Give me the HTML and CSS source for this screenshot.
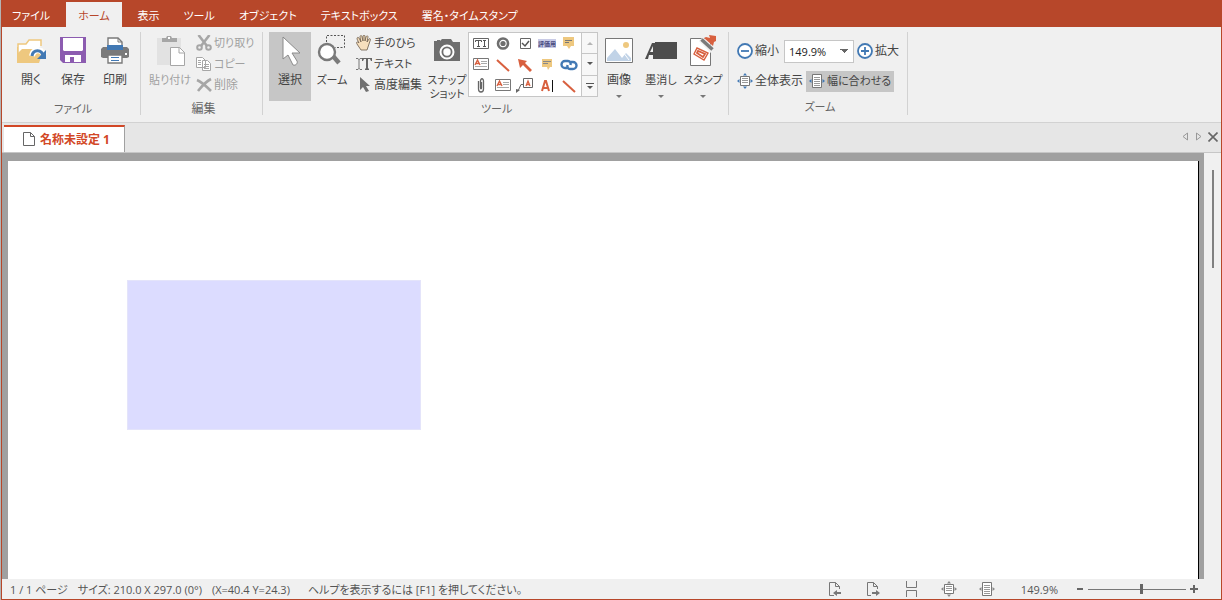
FILE: index.html
```html
<!DOCTYPE html>
<html lang="ja">

<head>
    <meta charset="UTF-8">
    <meta name="viewport" content="width=device-width, initial-scale=1.0">
    <title>名称未設定 1</title>
    <link rel="stylesheet" href="styles.css">
</head>

<body>
    <div class="window">
        <nav class="menu">
            <button class="menu-tab file">ファイル</button>
            <button class="menu-tab active">ホーム</button>
            <button class="menu-tab">表示</button>
            <button class="menu-tab">ツール</button>
            <button class="menu-tab">オブジェクト</button>
            <button class="menu-tab">テキストボックス</button>
            <button class="menu-tab">署名・タイムスタンプ</button>
        </nav>

        <div class="ribbon">
            <section class="group">
                <div class="tools">
                    <button class="big">
                        <svg width="32" height="32" viewBox="0 0 32 32"><path d="M3 26V9h8l3-4h12v6" fill="#fff" stroke="#eec87f" stroke-width="1.5"/><path d="M2 28V12h1v6l4-4h22l-5 14z" fill="#eec87f"/><path d="M17 21c1-7 10-8 12-1" fill="none" stroke="#fff" stroke-width="6"/><path d="M17 21c1-7 10-7 11 0" fill="none" stroke="#4279b4" stroke-width="3"/><path d="M31 15v9h-9z" fill="#4279b4"/></svg>
                        <span>開く</span>
                    </button>
                    <button class="big">
                        <svg width="32" height="32" viewBox="0 0 32 32"><path d="M3 2h26v26H6l-3-3z" fill="#8c5cb0"/><path d="M6 3h20v12l-1 1H7l-1-1zM8 20h16v7h-7v-5h-4v5H8z" fill="#fff"/></svg>
                        <span>保存</span>
                    </button>
                    <button class="big">
                        <svg width="32" height="32" viewBox="0 0 32 32"><path d="M2 14l2-2h24l2 2v8l-2 1H4l-2-1z" fill="#7a7a7a"/><path d="M9 13V3h10l4 4v6M9 20h14v8H9z" fill="#fff" stroke="#7a7a7a" stroke-width="1.4"/><path d="M19 3v4h4" fill="none" stroke="#7a7a7a"/><path d="M8 10h16v5H8zM12 22h8v1h-8zM12 25h8v1h-8z" fill="#4279b4"/><path d="M26 18h2v2h-2z" fill="#fff"/></svg>
                        <span>印刷</span>
                    </button>
                </div>
                <h2 class="kana">ファイル</h2>
            </section>

            <section class="group edit">
                <div class="tools">
                    <button class="big kana" disabled>
                        <svg width="32" height="32" viewBox="0 0 32 32"><path d="M3 3h24v27H3z" fill="#e2e2e2"/><path d="M8 7V3h4l1-2h4l1 2h5v4z" fill="#a6a6a6"/><path d="M14 2h2v2h-2z" fill="#fff"/><path d="M16.500 12.500h9l5 5v13h-14z" fill="#fff" stroke="#a6a6a6"/><path d="M25 12v6h6" fill="none" stroke="#a6a6a6"/></svg>
                        <span>貼り付け</span>
                    </button>
                    <div class="stack">
                        <button class="small kana" disabled>
                            <svg width="16" height="16" viewBox="0 0 16 16"><path d="M2.500 0l8.500 11M13.500 0L5 11" stroke="#a6a6a6" stroke-width="2.600" fill="none"/><circle cx="3.500" cy="12.500" r="2.300" fill="none" stroke="#a6a6a6" stroke-width="2"/><circle cx="12.500" cy="12.500" r="2.300" fill="none" stroke="#a6a6a6" stroke-width="2"/></svg>
                            <span>切り取り</span>
                        </button>
                        <button class="small kana" disabled>
                            <svg width="16" height="16" viewBox="0 0 16 16"><path d="M.5 1.500h6l3 3v7h-9zM6.500 4.500h5l3 3v7h-8z" fill="#fff" stroke="#a6a6a6"/><path d="M2 4.500h3M2 6.500h3M2 8.500h3M8 8.500h5M8 10.500h5M8 12.500h5" stroke="#a6a6a6"/></svg>
                            <span>コピー</span>
                        </button>
                        <button class="small" disabled>
                            <svg width="16" height="16" viewBox="0 0 16 16"><path d="M1 3c5 2 9 6 14 11M15 2C9 5 6 9 2 14" stroke="#a6a6a6" stroke-width="2.600" fill="none"/></svg>
                            <span>削除</span>
                        </button>
                    </div>
                </div>
                <h2>編集</h2>
            </section>

            <section class="group main">
                <div class="tools">
                    <button class="big selected">
                        <svg width="32" height="32" viewBox="0 0 32 32"><path d="M9 2v22l5-4 5 10c3 1 5-2 4-4l-5-8h8z" fill="#fff" stroke="#8a8a8a"/></svg>
                        <span>選択</span>
                    </button>
                    <button class="big kana">
                        <svg width="32" height="32" viewBox="0 0 32 32"><path d="M10.500 7V.5h18v12H19" fill="none" stroke="#555" stroke-dasharray="2 1.500"/><path d="M17 21l6 7" stroke="#7a7a7a" stroke-width="4.500"/><circle cx="11" cy="17" r="8" fill="#fff" stroke="#7a7a7a" stroke-width="2.400"/></svg>
                        <span>ズーム</span>
                    </button>
                    <div class="stack">
                        <button class="small kana">
                            <svg width="16" height="16" viewBox="0 0 16 16"><path d="M5 15l-4-6c-1-2 0-3 2-1L1 4c0-2 1-2 2-1l2 4-1-5c0-2 2-2 2 0l1 4V1c0-1 2-1 2 0v5l1-4c1-2 2-1 2 0l-1 5 2-3c1-1 2 0 1 2l-3 9z" fill="#f7dfbd" stroke="#6b5a49" stroke-width=".8"/></svg>
                            <span>手のひら</span>
                        </button>
                        <button class="small kana">
                            <svg width="16" height="16" viewBox="0 0 16 16"><path d="M0 2.500h2l1 1 1-1h2M3 3v10M0 13.500h2l1-1 1 1h2" fill="none" stroke="#777"/><path d="M6 2h10v3h-1l-1-2h-2v9l1 1v1H9v-1l1-1V3H8L7 5H6z" fill="#666"/></svg>
                            <span>テキスト</span>
                        </button>
                        <button class="small">
                            <svg width="16" height="16" viewBox="0 0 16 16"><path d="M4 0v13l3-3 3 5 3-1-3-5h4z" fill="#707070"/></svg>
                            <span>高度編集</span>
                        </button>
                    </div>
                    <button class="big kana two-line">
                        <svg width="32" height="32" viewBox="0 0 32 32"><path d="M3 6h3V5h3v1l2-2h9l2 3h7v19H3z" fill="#6e6e6e"/><circle cx="16" cy="17" r="6.500" fill="#6e6e6e" stroke="#fff" stroke-width="2"/><circle cx="16" cy="17" r="3.700" fill="#fff"/></svg>
                        <span>スナップ<br>ショット</span>
                    </button>

                    <div class="gallery">
                        <div class="gallery-items">
                            <button aria-label="テキストフィールド"><svg width="18" height="16" viewBox="0 0 18 16"><path d="M1.500 2.500h15v10h-15z" fill="#fff" stroke="#666"/><path d="M3.500 6V4.500h6V6M6.500 4.500v6M5 10.500h3M11 4.500h3M11 10.500h3M12.500 4.500v6" fill="none" stroke="#555"/></svg></button>
                            <button aria-label="ラジオボタン"><svg width="18" height="16" viewBox="0 0 18 16"><circle cx="9" cy="7.500" r="5" fill="#fff" stroke="#6e6e6e" stroke-width="2.600"/><circle cx="9" cy="7.500" r="2.600" fill="#6e6e6e"/></svg></button>
                            <button aria-label="チェックボックス"><svg width="18" height="16" viewBox="0 0 18 16"><path d="M4.500 2.500h10v10h-10z" fill="#fff" stroke="#666"/><path d="M6 7l3 3 4-5" fill="none" stroke="#555" stroke-width="1.500"/></svg></button>
                            <button aria-label="評価用スタンプ"><svg width="18" height="16" viewBox="0 0 18 16"><path d="M0 3h18v9H0z" fill="#c9cbe6"/><text x="0" y="10" class="stamp-text">評価用</text></svg></button>
                            <button aria-label="ノート"><svg width="18" height="16" viewBox="0 0 18 16"><path d="M3 1h11v9h-3l-2 3-2-3H3z" fill="#eec87f"/><path d="M5 4.500h7M5 6.500h4" stroke="#777"/></svg></button>
                            <button aria-label="テキスト注釈"><svg width="18" height="16" viewBox="0 0 18 16"><use href="#note-box"/></svg></button>
                            <button aria-label="直線"><svg width="18" height="16" viewBox="0 0 18 16"><use href="#line"/></svg></button>
                            <button aria-label="矢印"><svg width="18" height="16" viewBox="0 0 18 16"><path d="M2 2l9 2-2 2 7 7-2 2-7-7-3 3z" fill="#d8603f"/></svg></button>
                            <button aria-label="吹き出し"><svg width="18" height="16" viewBox="0 0 18 16"><path d="M4 2h10v8h-2l-2 3-1-3H4z" fill="#eec87f"/><path d="M5 4.500h8M5 6.500h5" stroke="#888"/></svg></button>
                            <button aria-label="リンク"><svg width="18" height="16" viewBox="0 0 18 16"><path d="M8 11H5a3.500 3.500 0 010-7h3C10 4 11 6 10.500 8M10 5h3a3.500 3.500 0 010 7h-3C8 12 7 10 7.500 8" fill="none" stroke="#4279b4" stroke-width="2.400"/></svg></button>
                            <button aria-label="添付"><svg width="18" height="16" viewBox="0 0 18 16"><path d="M6.500 3v8c0 4 5 4 5 0V3c0-3-3-3-3 0v7c0 1 1 1 1 0V4" fill="none" stroke="#666" stroke-width="1.300"/></svg></button>
                            <button aria-label="テキストボックス"><svg width="18" height="16" viewBox="0 0 18 16"><use href="#note-box"/></svg></button>
                            <button aria-label="引き出し線"><svg width="18" height="16" viewBox="0 0 18 16"><path d="M7.500.5h9v9h-9z" fill="#fff" stroke="#666"/><path d="M7 6.500H5L2 13" fill="none" stroke="#666"/><path d="M0 11l4 1-4 3z" fill="#666"/><path d="M10 8l2-5 2 5M10.500 6.500h3" fill="none" stroke="#d8603f" stroke-width="1.300"/></svg></button>
                            <button aria-label="タイプライター"><svg width="18" height="16" viewBox="0 0 18 16"><path d="M4 13l3-10h1l3 10M5 10h5" fill="none" stroke="#d8603f" stroke-width="2"/><path d="M14.500 2v12" stroke="#111"/></svg></button>
                            <button aria-label="線"><svg width="18" height="16" viewBox="0 0 18 16"><use href="#line"/></svg></button>
                        </div>
                        <div class="gallery-scroll">
                            <button aria-label="上へ"><svg width="6" height="4" viewBox="0 0 6 4"><path d="M0 4l3-3 3 3z" fill="#b5b5b5"/></svg></button>
                            <button aria-label="下へ"><svg width="6" height="4" viewBox="0 0 6 4"><path d="M0 0h6L3 3z" fill="#555"/></svg></button>
                            <button aria-label="その他"><svg width="8" height="8" viewBox="0 0 8 8"><path d="M0 1.500h8" stroke="#555"/><path d="M1 4h6L4 7z" fill="#555"/></svg></button>
                        </div>
                    </div>

                    <button class="big">
                        <svg width="32" height="32" viewBox="0 0 32 32"><path d="M2.500 3.500h27v24h-27z" fill="#fff" stroke="#777"/><circle cx="23" cy="10" r="3" fill="#eec87f"/><path d="M4 26v-3l8-9 7 9 4-5 5 5v3z" fill="#c1d3e7"/><path d="M17 20l3-3 6 8" stroke="#fff" fill="none"/></svg>
                        <span>画像</span>
                        <i class="arrow"></i>
                    </button>
                    <button class="big kana">
                        <svg width="32" height="32" viewBox="0 0 32 32"><path d="M0 24L7 8h4v16H8v-4H4l-1 4zM5 17h3v-6z" fill="#4d4d4d"/><path d="M10 7h22v17H10z" fill="#4d4d4d"/></svg>
                        <span>墨消し</span>
                        <i class="arrow"></i>
                    </button>
                    <button class="big kana">
                        <svg width="32" height="32" viewBox="0 0 32 32"><path d="M3.500 3.500h20v27h-20z" fill="#fff" stroke="#777"/><path d="M7 19l3-6 11 5-4 7z" fill="#fff" stroke="#d8603f" stroke-width="1.400"/><path d="M10 18l1-2 7 3-2 3z" fill="none" stroke="#d8603f" stroke-width="1.800"/><path d="M14 4l12 12" stroke="#f0f0f0" stroke-width="6"/><path d="M14.500 4.500l11 10" stroke="#7a7a7a" stroke-width="3.500"/><path d="M17 3l9 8 1-4 2-1v-5l-7-1 1 3-4-1z" fill="#d8603f"/></svg>
                        <span>スタンプ</span>
                        <i class="arrow"></i>
                    </button>
                </div>
                <h2 class="kana left">ツール</h2>
            </section>

            <section class="group zoom">
                <div class="zoom-rows">
                    <div class="zoom-row">
                        <button class="small"><svg width="16" height="16" viewBox="0 0 16 16"><circle cx="8" cy="8" r="7" fill="#fff" stroke="#4279b4" stroke-width="1.800"/><path d="M4 8h8" stroke="#4279b4" stroke-width="1.800"/></svg><span>縮小</span></button>
                        <select aria-label="表示倍率">
                            <option>149.9%</option>
                        </select>
                        <button class="small"><svg width="16" height="16" viewBox="0 0 16 16"><circle cx="8" cy="8" r="7" fill="#fff" stroke="#4279b4" stroke-width="1.800"/><path d="M4 8h8M8 4v8" stroke="#4279b4" stroke-width="1.800"/></svg><span>拡大</span></button>
                    </div>
                    <div class="zoom-row">
                        <button class="small blue"><svg width="16" height="16" viewBox="0 0 16 16"><use href="#fit-page"/></svg><span>全体表示</span></button>
                        <button class="small kana blue selected"><svg width="16" height="16" viewBox="0 0 16 16"><use href="#fit-width"/></svg><span>幅に合わせる</span></button>
                    </div>
                </div>
                <h2 class="kana">ズーム</h2>
            </section>
        </div>

        <div class="doc-bar">
            <button class="doc-tab">
                <svg width="12" height="14" viewBox="0 0 12 14"><path d="M.5.5h7l4 4v9H.5z" fill="#fff" stroke="#666"/><path d="M7.500.5v4h4" fill="none" stroke="#666"/></svg>
                <span>名称未設定 1</span>
            </button>
            <div class="doc-nav">
                <button aria-label="前のタブ"><svg width="6" height="9" viewBox="0 0 6 9"><path d="M5.500 1v7L1 4.500z" fill="none" stroke="#999"/></svg></button>
                <button aria-label="次のタブ"><svg width="6" height="9" viewBox="0 0 6 9"><path d="M.5 1v7L5 4.500z" fill="none" stroke="#999"/></svg></button>
                <button aria-label="閉じる"><svg width="10" height="10" viewBox="0 0 10 10"><path d="M.5.5l9 9M9.500.5l-9 9" stroke="#666" stroke-width="1.600"/></svg></button>
            </div>
        </div>

        <main class="view">
            <div class="canvas">
                <div class="page">
                    <div class="field"></div>
                </div>
            </div>
            <div class="scrollbar">
                <div class="thumb"></div>
            </div>
        </main>

        <footer class="status">
            <span>1 / 1 ページ</span>
            <span>サイズ: 210.0 X 297.0 (0°)</span>
            <span>(X=40.4 Y=24.3)</span>
            <span class="help">ヘルプを表示するには [F1] を押してください。</span>
            <div class="status-icons">
                <button aria-label="前のページ"><svg width="16" height="16" viewBox="0 0 16 16"><path d="M7 14.500H2.500v-13h6l4 4V8M8.500 1.500v4h4" fill="none" stroke="#777"/><path d="M6 12l4-3v2h4v2h-4v2z" fill="#777"/></svg></button>
                <button aria-label="次のページ"><svg width="16" height="16" viewBox="0 0 16 16"><path d="M6 14.500H2.500v-13h6l4 4V8M8.500 1.500v4h4" fill="none" stroke="#777"/><path d="M15 12l-4-3v2H7v2h4v2z" fill="#777"/></svg></button>
                <button aria-label="連続ページ"><svg width="16" height="16" viewBox="0 0 16 16"><path d="M3.500 0v6.500h10V0M3.500 16V9.500h10V16" fill="none" stroke="#777"/></svg></button>
                <button class="gray" aria-label="全体表示"><svg width="16" height="16" viewBox="0 0 16 16"><use href="#fit-page"/></svg></button>
                <button class="gray" aria-label="幅に合わせる"><svg width="16" height="16" viewBox="0 0 16 16"><use href="#fit-width"/></svg></button>
            </div>
            <span class="percent">149.9%</span>
            <div class="zoom-slider">
                <button aria-label="縮小"><svg width="8" height="8" viewBox="0 0 8 8"><path d="M1 4h6" stroke="#666" stroke-width="2"/></svg></button>
                <input type="range" min="0" max="100" value="55" aria-label="ズーム">
                <button aria-label="拡大"><svg width="8" height="8" viewBox="0 0 8 8"><path d="M0 4h8M4 0v8" stroke="#666" stroke-width="2"/></svg></button>
            </div>
        </footer>
    </div>

    <!-- shared icons -->
    <svg class="defs" width="0" height="0">
        <symbol id="fit-page" viewBox="0 0 16 16">
            <path d="M6 2.500L8 0l2 2.500zM6 13.500L8 16l2-2.500zM2.500 6L0 8l2.500 2zM13.500 6L16 8l-2.500 2z" fill="currentColor"/>
            <path d="M3.500 3.500h9v9h-9z" fill="#fff" stroke="#777"/>
            <path d="M5 5.500h6M5 7.500h6M5 9.500h6" stroke="#999"/>
        </symbol>
        <symbol id="fit-width" viewBox="0 0 16 16">
            <path d="M2.500 6L0 8l2.500 2zM13.500 6L16 8l-2.500 2z" fill="currentColor"/>
            <path d="M3.500 1.500h9v13h-9z" fill="#fff" stroke="#777"/>
            <path d="M5 4.500h6M5 6.500h6M5 8.500h6M5 10.500h6M5 12.500h6" stroke="#999"/>
        </symbol>
        <symbol id="note-box" viewBox="0 0 18 16">
            <path d="M1.500 1.500h15v11h-15z" fill="#fff" stroke="#777"/>
            <path d="M3 8l2.500-5L8 8M4 6.500h3" fill="none" stroke="#d8603f" stroke-width="1.400"/>
            <path d="M9 4.500h6M9 6.500h6M3 9.500h12" stroke="#aaa"/>
        </symbol>
        <symbol id="line" viewBox="0 0 18 16">
            <path d="M3 3l12 11" stroke="#d8603f" stroke-width="2"/>
        </symbol>
    </svg>
</body>

</html>
```

FILE: styles.css
```css
* {
    box-sizing: border-box;
}

body {
    margin: 0;
    background-color: #b4b4b4;
    font-family: "Open Sans", "Noto Sans CJK JP", sans-serif;
    font-size: 12px;
    font-feature-settings: "palt";
    color: #444;
}

button {
    border: none;
    padding: 0;
    background: none;
    font: inherit;
    font-feature-settings: inherit;
    color: inherit;
    white-space: nowrap;
}

svg {
    display: block;
    flex: none;
}

.defs {
    position: absolute;
}

.window {
    display: flex;
    flex-direction: column;
    height: 100vh;
    margin-left: 1px;
    border: 1px solid #b7472a;
    border-top: none;
    background-color: #f0f0f0;
}

.menu {
    display: flex;
    align-items: flex-end;
    height: 27px;
    background-color: #b7472a;
    font-size: 11px;
}

.menu-tab {
    height: 25px;
    padding: 0 12px;
    color: #fff;
}

.menu-tab.file {
    padding: 0 10px;
    margin-right: 6px;
}

.menu-tab.active {
    margin-right: 4px;
    background-color: #f0f0f0;
    color: #b7472a;
}

.ribbon {
    display: flex;
    height: 96px;
    padding: 5px 0 7px;
    border-bottom: 1px solid #d2d2d2;
}

.group {
    display: flex;
    flex-direction: column;
    padding: 0 4px 0 8px;
    border-right: 1px solid #d2d2d2;
}

.group h2 {
    margin: 0;
    font-size: 12px;
    font-weight: normal;
    line-height: 16px;
    text-align: center;
    color: #666;
}

.group h2.left {
    padding-left: 212px;
    text-align: left;
}

.group.edit {
    width: 122px;
}

.group.main {
    padding: 0 4px 0 6px;
}

.tools {
    display: flex;
    height: 69px;
}

.big {
    display: flex;
    flex-direction: column;
    align-items: center;
    flex: none;
    width: 42px;
    height: 69px;
    padding-top: 3px;
    line-height: 13px;
}

.big span {
    margin-top: 6px;
}

.big.two-line {
    line-height: 14px;
}

/* long kana labels */
.kana,
.group h2.kana {
    font-size: 11px;
}

.big:disabled,
.small:disabled {
    color: #a0a0a0;
}

.selected {
    background-color: #c6c6c6;
}

.arrow {
    margin-top: 9px;
    border: 3px solid transparent;
    border-top-color: #777;
    border-bottom: none;
}

.stack {
    display: flex;
    flex-direction: column;
    width: 73px;
    padding-left: 3px;
}

.edit .stack {
    padding-left: 5px;
}

.small {
    display: flex;
    align-items: center;
    gap: 2px;
    height: 21px;
    line-height: 16px;
}

.gallery {
    display: flex;
    width: 130px;
    height: 65px;
    border: 1px solid #c6c6c6;
    background-color: #fff;
}

.gallery-items {
    display: grid;
    grid-template-columns: repeat(5, 22px);
    grid-template-rows: repeat(3, 21px);
    place-items: center;
    width: 112px;
    padding-left: 1px;
}

.stamp-text {
    font-size: 6px;
    font-weight: bold;
    fill: #4a4a80;
}

.gallery-scroll {
    display: flex;
    flex-direction: column;
    flex: 1;
    border-left: 1px solid #c6c6c6;
}

.gallery-scroll button {
    display: flex;
    align-items: center;
    justify-content: center;
    flex: 1;
    background-color: #f7f7f7;
}

.gallery-scroll button + button {
    border-top: 1px solid #c6c6c6;
}

.zoom {
    width: 179px;
}

.zoom-rows {
    height: 69px;
    padding-top: 7px;
}

.zoom-row {
    display: flex;
    align-items: center;
    gap: 3px;
    height: 24px;
}

.zoom-row + .zoom-row {
    margin-top: 6px;
}

.zoom-row select {
    appearance: none;
    width: 70px;
    height: 23px;
    padding: 0 4px;
    margin-left: 2px;
    border: 1px solid #c6c6c6;
    border-radius: 0;
    background: conic-gradient(from -45deg at 50% 100%, #666 90deg, #fff 0) no-repeat right 5px center / 8px 4px, #fff;
    font: inherit;
    font-size: 11px;
    color: #222;
}

.zoom-row .selected {
    padding: 0 3px;
}

.blue svg {
    color: #4279b4;
}

.gray svg {
    color: #888;
}

.doc-bar {
    display: flex;
    justify-content: space-between;
    height: 30px;
    padding: 2px 3px 0 2px;
    border-bottom: 1px solid #c6c6c6;
    background-color: #e6e6e6;
}

.doc-tab {
    display: flex;
    align-items: center;
    gap: 5px;
    padding: 0 14px 2px 19px;
    border-top: 2px solid #d24726;
    border-right: 1px solid #a0a0a0;
    background-color: #fff;
    font-size: 12px;
    font-weight: bold;
    color: #d24726;
}

.doc-nav {
    display: flex;
    align-items: center;
    gap: 8px;
    padding-bottom: 4px;
}

.doc-nav button:last-child {
    margin-left: -2px;
}

.view {
    display: flex;
    flex: 1;
    min-height: 0;
}

.canvas {
    flex: 1;
    padding: 8px 5px 0 6px;
    background-color: #a0a0a0;
}

.page {
    position: relative;
    height: 100%;
    border-right: 1px solid #000;
    background-color: #fff;
}

.field {
    position: absolute;
    left: 119px;
    top: 119px;
    width: 294px;
    height: 150px;
    border: 1px solid #e4e4fa;
    background-color: #dcdcff;
}

.scrollbar {
    display: flex;
    justify-content: center;
    width: 17px;
    padding-top: 17px;
}

.thumb {
    width: 2px;
    height: 98px;
    background-color: #808080;
}

.status {
    display: flex;
    align-items: center;
    gap: 10px;
    height: 20px;
    padding: 0 23px 0 8px;
    font-size: 11px;
    white-space: nowrap;
    color: #555;
}

.help {
    margin-left: 8px;
}

.status-icons {
    display: flex;
    gap: 22px;
    margin-left: auto;
}

.percent {
    margin-left: 16px;
}

.zoom-slider {
    display: flex;
    align-items: center;
    gap: 4px;
    margin-left: 8px;
}

.zoom-slider input {
    appearance: none;
    width: 98px;
    height: 10px;
    margin: 0;
    background: linear-gradient(#777, #777) no-repeat center / 100% 1px;
}

.zoom-slider input::-webkit-slider-thumb {
    appearance: none;
    width: 3px;
    height: 10px;
    background-color: #666;
}
```
